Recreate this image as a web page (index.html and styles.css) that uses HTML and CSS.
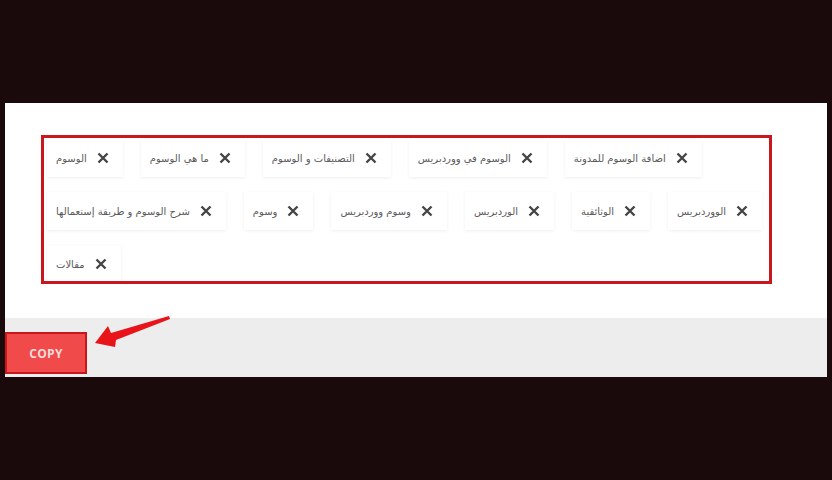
FILE: index.html
```html
<!DOCTYPE html>
<html lang="ar">
<head>
<meta charset="utf-8">
<title>Tags</title>
<link rel="stylesheet" href="styles.css">
</head>
<body>
<div class="panel">
  <div class="panel-body">
    <div class="tag-box">
      <span class="tag"><span class="tag-text" dir="rtl">الوسوم</span><svg class="x" viewBox="0 0 12 12"><path d="M1.5 1.5L10.5 10.5M10.5 1.5L1.5 10.5"/></svg></span>
      <span class="tag"><span class="tag-text" dir="rtl">ما هي الوسوم</span><svg class="x" viewBox="0 0 12 12"><path d="M1.5 1.5L10.5 10.5M10.5 1.5L1.5 10.5"/></svg></span>
      <span class="tag"><span class="tag-text" dir="rtl">التصنيفات و الوسوم</span><svg class="x" viewBox="0 0 12 12"><path d="M1.5 1.5L10.5 10.5M10.5 1.5L1.5 10.5"/></svg></span>
      <span class="tag"><span class="tag-text" dir="rtl">الوسوم في ووردبريس</span><svg class="x" viewBox="0 0 12 12"><path d="M1.5 1.5L10.5 10.5M10.5 1.5L1.5 10.5"/></svg></span>
      <span class="tag"><span class="tag-text" dir="rtl">اضافة الوسوم للمدونة</span><svg class="x" viewBox="0 0 12 12"><path d="M1.5 1.5L10.5 10.5M10.5 1.5L1.5 10.5"/></svg></span>
      <span class="tag"><span class="tag-text" dir="rtl">شرح الوسوم و طريقة إستعمالها</span><svg class="x" viewBox="0 0 12 12"><path d="M1.5 1.5L10.5 10.5M10.5 1.5L1.5 10.5"/></svg></span>
      <span class="tag"><span class="tag-text" dir="rtl">وسوم</span><svg class="x" viewBox="0 0 12 12"><path d="M1.5 1.5L10.5 10.5M10.5 1.5L1.5 10.5"/></svg></span>
      <span class="tag"><span class="tag-text" dir="rtl">وسوم ووردبريس</span><svg class="x" viewBox="0 0 12 12"><path d="M1.5 1.5L10.5 10.5M10.5 1.5L1.5 10.5"/></svg></span>
      <span class="tag"><span class="tag-text" dir="rtl">الوردبريس</span><svg class="x" viewBox="0 0 12 12"><path d="M1.5 1.5L10.5 10.5M10.5 1.5L1.5 10.5"/></svg></span>
      <span class="tag"><span class="tag-text" dir="rtl">الوثائقية</span><svg class="x" viewBox="0 0 12 12"><path d="M1.5 1.5L10.5 10.5M10.5 1.5L1.5 10.5"/></svg></span>
      <span class="tag"><span class="tag-text" dir="rtl">الووردبريس</span><svg class="x" viewBox="0 0 12 12"><path d="M1.5 1.5L10.5 10.5M10.5 1.5L1.5 10.5"/></svg></span>
      <span class="tag"><span class="tag-text" dir="rtl">مقالات</span><svg class="x" viewBox="0 0 12 12"><path d="M1.5 1.5L10.5 10.5M10.5 1.5L1.5 10.5"/></svg></span>
    </div>
  </div>
  <div class="panel-foot">
    <button class="copy-btn">COPY</button>
  </div>
  <svg class="arrow" viewBox="0 0 832 480" width="832" height="480">
    <polygon points="95,343 108,326 111,333 169,316 170,319 116,340 115,347"/>
  </svg>
</div>
</body>
</html>
```

FILE: styles.css
```css
html, body {
  margin: 0;
  padding: 0;
}
body {
  background: #1a0a0c;
  width: 832px;
  height: 480px;
  overflow: hidden;
  font-family: "DejaVu Sans", "Noto Sans", sans-serif;
}
.panel {
  margin: 103px 0 0 5px;
  width: 822px;
}
.panel-body {
  background: #ffffff;
  height: 215px;
  padding: 32px 0 0 36px;
  box-sizing: border-box;
}
.tag-box {
  width: 731px;
  height: 149px;
  box-sizing: border-box;
  border: 3px solid #c8171d;
  padding: 1px 0 0 3px;
  display: flex;
  flex-wrap: wrap;
  align-content: flex-start;
  column-gap: 18px;
  row-gap: 15px;
  overflow: hidden;
}
.tag {
  display: flex;
  align-items: center;
  height: 38px;
  padding: 0 14px 0 9px;
  gap: 10px;
  background: #fff;
  box-shadow: 0 1px 3px rgba(0, 0, 0, 0.07);
  box-sizing: border-box;
}
.tag-text {
  font-size: 10px;
  color: #5a5a5a;
  white-space: nowrap;
}
.x {
  width: 12px;
  height: 12px;
  flex: none;
}
.x path {
  stroke: #454545;
  stroke-width: 2.4;
  fill: none;
}
.panel-foot {
  background: #ededed;
  height: 59px;
  padding-top: 14px;
  box-sizing: border-box;
}
.copy-btn {
  display: block;
  width: 82px;
  height: 42px;
  margin: 0;
  background: #f04a4a;
  border: 2px solid #c8161b;
  color: #fbdcdc;
  font-family: "Open Sans", "DejaVu Sans", sans-serif;
  font-weight: 700;
  font-size: 12px;
  letter-spacing: 0.3px;
  padding: 0;
}
.arrow {
  position: absolute;
  left: 0;
  top: 0;
  pointer-events: none;
}
.arrow polygon {
  fill: #e8141a;
}
```
